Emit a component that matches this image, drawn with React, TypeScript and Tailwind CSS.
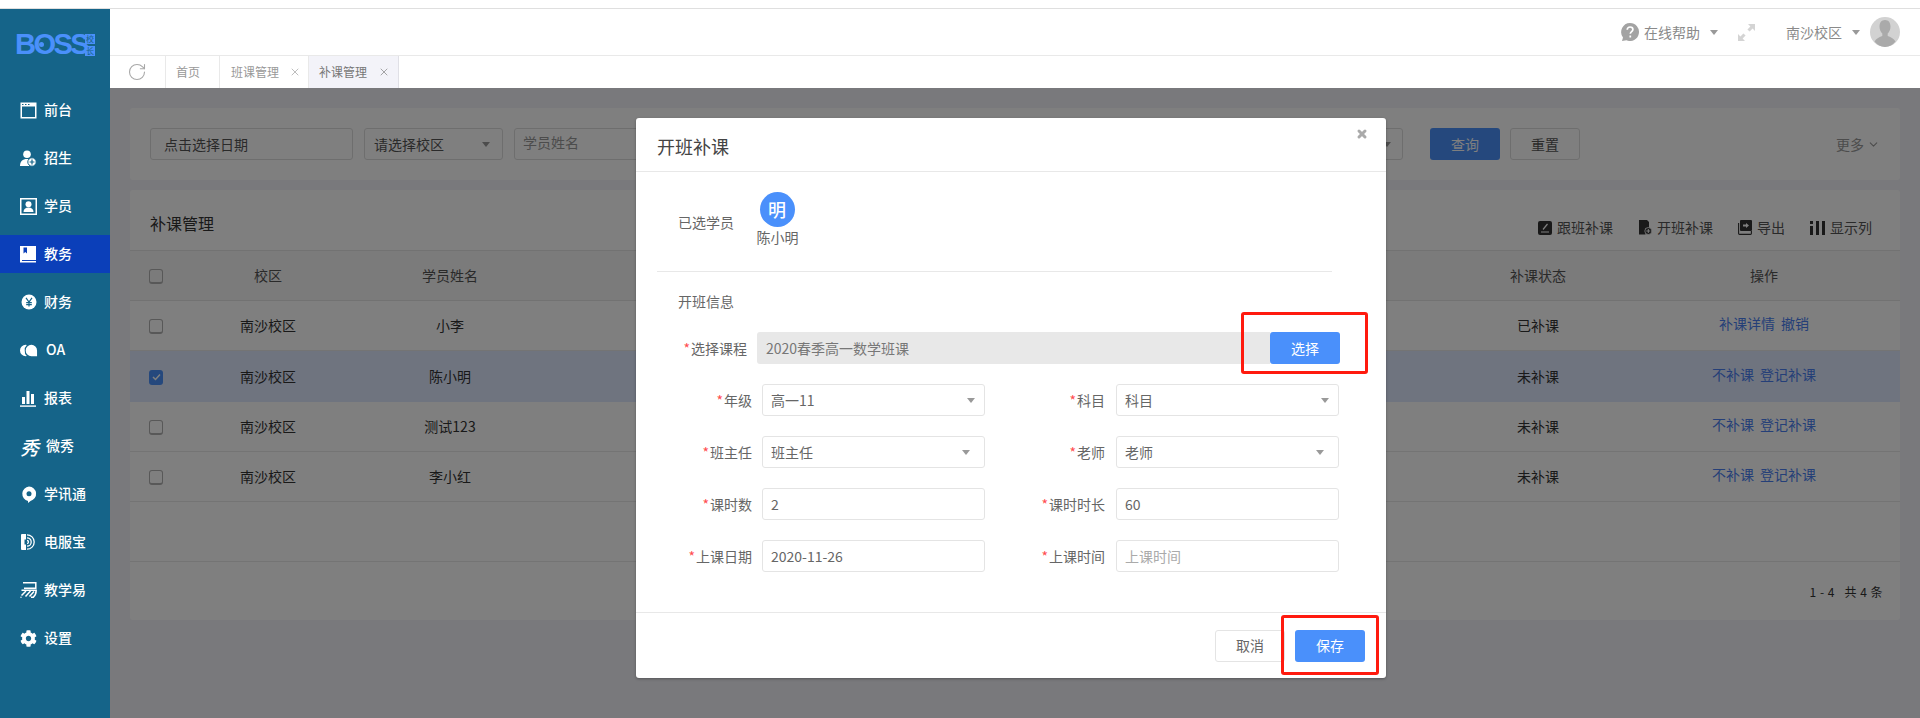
import { FaCog } from "react-icons/fa";
import { RotateCw, X, ChevronDown } from "lucide-react";
import type { ReactNode } from "react";

const font = { fontFamily: '"Noto Sans CJK SC", "Noto Sans", sans-serif' };

function IconCalendar() {
  return (
    <svg width="17" height="17" viewBox="0 0 17 17">
      <rect x="0.5" y="0.5" width="16" height="16" fill="#fff" />
      <rect x="2" y="4.5" width="13" height="10.5" fill="#156489" />
      <rect x="2" y="2" width="1.5" height="1" fill="#156489" />
      <rect x="5" y="2" width="1.5" height="1" fill="#156489" />
      <rect x="8" y="2" width="1.5" height="1" fill="#156489" />
    </svg>
  );
}

function IconUserAdd() {
  return (
    <svg width="17" height="17" viewBox="0 0 17 17">
      <circle cx="7" cy="4.2" r="3.8" fill="#fff" />
      <path d="M0 16c0-4.5 2.5-7 7-7 2 0 3.4.5 4.5 1.5L9 16z" fill="#fff" />
      <circle cx="12" cy="12" r="4.2" fill="#fff" stroke="#156489" strokeWidth="1" />
      <path d="M12 9.6v4.8M9.6 12h4.8" stroke="#156489" strokeWidth="1.2" />
    </svg>
  );
}

function IconStudent() {
  return (
    <svg width="17" height="17" viewBox="0 0 17 17">
      <rect x="0.75" y="0.75" width="15.5" height="15.5" fill="none" stroke="#fff" strokeWidth="1.5" />
      <circle cx="8.5" cy="6.3" r="3" fill="#fff" />
      <path d="M3.5 14c0-3 2-4.5 5-4.5s5 1.5 5 4.5z" fill="#fff" />
    </svg>
  );
}

function IconBook() {
  return (
    <svg width="17" height="17" viewBox="0 0 17 17">
      <path d="M0 0h16v14H2v1h14v1.5H0z" fill="#fff" />
      <path d="M3.5 1.5h3.5v6L5.25 6 3.5 7.5z" fill="#0b3fb9" />
    </svg>
  );
}

function IconYen() {
  return (
    <svg width="16" height="16" viewBox="0 0 16 16" className="ml-[1px]">
      <circle cx="8" cy="8" r="7.5" fill="#fff" />
      <path d="M5 3.8 8 8l3-4.2M5.2 8.6h5.6M5.2 10.6h5.6M8 8v4.6" fill="none" stroke="#156489" strokeWidth="1.2" />
    </svg>
  );
}

function IconOA() {
  return (
    <svg width="19" height="13" viewBox="0 0 19 13">
      <path d="M6 .5a6 6 0 1 0 0 12 6 6 0 0 0 1.2-.1A7 7 0 0 1 5 6.5 7 7 0 0 1 7.2.6 6 6 0 0 0 6 .5z" fill="#fff" />
      <path d="M12 .5a6 6 0 0 1 6 6v6h-6a6 6 0 1 1 0-12z" fill="#fff" />
    </svg>
  );
}

function IconChart() {
  return (
    <svg width="16" height="17" viewBox="0 0 16 17">
      <rect x="2" y="7" width="3" height="7" fill="#fff" />
      <rect x="6.5" y="1" width="3" height="13" fill="#fff" />
      <rect x="11" y="4" width="3" height="10" fill="#fff" />
      <rect x="0" y="15.4" width="16" height="1.4" fill="#fff" />
    </svg>
  );
}

function IconPin() {
  return (
    <svg width="16" height="17" viewBox="0 0 16 17" className="ml-[1px]">
      <path d="M8 .5a7.3 7.3 0 0 1 1.5 14.4L7 17v-2.1A7.3 7.3 0 0 1 8 .5z" fill="#fff" />
      <circle cx="8" cy="7.8" r="2.5" fill="#156489" />
    </svg>
  );
}

function IconPhone() {
  return (
    <svg width="15" height="16" viewBox="0 0 15 16" className="ml-[1px]">
      <path d="M1 0h4v5.5H3.5v5H5V16H1a1 1 0 0 1-1-1V1a1 1 0 0 1 1-1z" fill="#fff" />
      <path d="M6 .8a7.2 7.2 0 0 1 0 14.4M6 3.8a4.2 4.2 0 0 1 0 8.4M6 6.5a1.5 1.5 0 0 1 0 3" fill="none" stroke="#fff" strokeWidth="1.3" />
    </svg>
  );
}

function IconStripes() {
  return (
    <svg width="17" height="16" viewBox="0 0 17 16">
      <path d="M3 .8h12.8v5.4H4" fill="none" stroke="#fff" strokeWidth="1.5" />
      <path d="M1.5 8.3h14.7c0 3-.8 5.2-3 7H11" fill="none" stroke="#fff" strokeWidth="1.5" />
      <path d="M6 9 1.5 13.5M10.5 9 5.5 14.5M14 9.5 9.5 14.5" fill="none" stroke="#fff" strokeWidth="1.5" />
      <circle cx="1" cy="15.3" r="0.7" fill="#fff" />
    </svg>
  );
}

function IconEdit() {
  return (
    <svg width="14" height="14" viewBox="0 0 14 14">
      <rect width="14" height="14" rx="2" fill="#333" />
      <path d="M3 11h8M5 8.5 9.5 3" stroke="#fff" strokeWidth="1.2" fill="none" />
    </svg>
  );
}

function IconDocAdd() {
  return (
    <svg width="14" height="15" viewBox="0 0 14 15">
      <path d="M1 0h8l2 2v6H7.5v6.5H1z" fill="#333" />
      <circle cx="10.3" cy="11" r="3.5" fill="#333" stroke="#fff" strokeWidth="0.8" />
      <path d="M10.3 9v4M8.3 11h4" stroke="#fff" strokeWidth="1" />
    </svg>
  );
}

function IconExport() {
  return (
    <svg width="14" height="15" viewBox="0 0 14 15">
      <path d="M.6 3v10.5c0 .5.4.9.9.9h11c.5 0 .9-.4.9-.9V11" fill="none" stroke="#333" strokeWidth="1.1" />
      <rect x="2" y="0" width="12" height="11" rx="1" fill="#333" />
      <path d="M5 4.5h3V3l3 2.5L8 8V6.5H5z" fill="#fff" />
    </svg>
  );
}

function IconColumns() {
  return (
    <svg width="15" height="14" viewBox="0 0 15 14">
      <rect x="0" y="0" width="3" height="3" fill="#333" />
      <rect x="0" y="5" width="3" height="9" fill="#333" />
      <rect x="6" y="0" width="3" height="14" fill="#333" />
      <rect x="12" y="0" width="3" height="14" fill="#333" />
    </svg>
  );
}

const navItems: { label: string; icon: ReactNode; active?: boolean; shift?: boolean }[] = [
  { label: "前台", icon: <IconCalendar /> },
  { label: "招生", icon: <IconUserAdd /> },
  { label: "学员", icon: <IconStudent /> },
  { label: "教务", icon: <IconBook />, active: true },
  { label: "财务", icon: <IconYen /> },
  { label: "OA", icon: <IconOA />, shift: true },
  { label: "报表", icon: <IconChart /> },
  { label: "微秀", icon: <span className="text-[19px] leading-none font-medium italic">秀</span>, shift: true },
  { label: "学讯通", icon: <IconPin /> },
  { label: "电服宝", icon: <IconPhone /> },
  { label: "教学易", icon: <IconStripes /> },
  { label: "设置", icon: <FaCog size={17} /> },
];

function Sidebar() {
  return (
    <aside className="w-[110px] shrink-0 bg-[#156489] text-white">
      <div className="relative h-[82px] pl-[15px] pt-[24px] flex items-start">
        <span
          className="text-[29px] leading-[23px] font-bold tracking-[-2.5px] text-[#4a90fb]"
          style={{ fontFamily: '"Liberation Sans", sans-serif' }}
        >
          BOSS
        </span>
        <span className="absolute left-[39px] top-[33px] w-[5px] h-[5px] rounded-full bg-[#4a90fb]" />
        <div className="absolute left-[85px] top-[25px] flex flex-col gap-[2px]">
          <span className="w-[10px] h-[10px] bg-[#4a90fb] text-[#156489] text-[8px] leading-[10px] text-center">校</span>
          <span className="w-[10px] h-[10px] bg-[#4a90fb] text-[#156489] text-[8px] leading-[10px] text-center">长</span>
        </div>
      </div>
      {navItems.map((item) => (
        <div
          key={item.label}
          className={
            item.active
              ? "h-[38px] mb-[10px] pl-[20px] flex items-center bg-[#0b3fb9]"
              : "h-[38px] mb-[10px] pl-[20px] flex items-center"
          }
        >
          <span className="w-[18px] flex justify-start items-center">{item.icon}</span>
          <span
            className={
              item.shift
                ? "ml-[8px] mt-[-2px] text-[14px] font-medium leading-none"
                : "ml-[6px] mt-[-2px] text-[14px] font-medium leading-none"
            }
          >
            {item.label}
          </span>
        </div>
      ))}
    </aside>
  );
}

function Caret({ className = "" }: { className?: string }) {
  return (
    <span
      className={
        "w-0 h-0 border-l-[4.5px] border-r-[4.5px] border-t-[5px] border-l-transparent border-r-transparent border-t-[#999] " +
        className
      }
    />
  );
}

function TopBar() {
  return (
    <div className="h-[47px] border-b border-[#e9e9e9] flex items-center justify-end pr-[20px] text-[14px] text-[#8a8a8a]">
      <svg width="18" height="18" viewBox="0 0 18 18">
        <path d="M9 0a9 9 0 1 1-3.5 17.3L1 18l1-3.6A9 9 0 0 1 9 0z" fill="#a3a3a3" />
        <path d="M6.2 6.8c0-1.7 1.2-2.8 2.9-2.8s2.8 1 2.8 2.4c0 2.2-2.6 2.2-2.6 4.4M9.3 12.4v2" fill="none" stroke="#fff" strokeWidth="1.7" />
      </svg>
      <span className="ml-[5px]">在线帮助</span>
      <Caret className="ml-[10px]" />
      <svg className="ml-[20px]" width="17" height="17" viewBox="0 0 17 17">
        <path d="M10 0h7v7l-2.4-2.4-3 3-2.2-2.2 3-3zM7 17H0v-7l2.4 2.4 3-3 2.2 2.2-3 3z" fill="#d4d4d4" />
      </svg>
      <span className="ml-[31px]">南沙校区</span>
      <Caret className="ml-[10px]" />
      <svg className="ml-[10px]" width="30" height="30" viewBox="0 0 30 30">
        <circle cx="15" cy="15" r="15" fill="#d2d2d2" />
        <path d="M15 3c3.6 0 5.5 2.8 5.5 6.5 0 3-1.2 5.5-2.8 7v2.5c2.5 1 6.3 2.5 7.8 5.5A15 15 0 0 1 15 30a15 15 0 0 1-10.5-5.5c1.5-3 5.3-4.5 7.8-5.5v-2.5c-1.6-1.5-2.8-4-2.8-7C9.5 5.8 11.4 3 15 3z" fill="#aaa" />
      </svg>
    </div>
  );
}

function TabBar() {
  return (
    <div className="h-[32px] flex text-[12px] text-[#999]">
      <div className="w-[56px] flex items-center justify-center border-r border-[#e9e9e9]">
        <RotateCw size={20} strokeWidth={1.3} color="#a8a8a8" className="ml-[-1px]" />
      </div>
      <div className="w-[54px] flex items-center pl-[10px] border-r border-[#e9e9e9]">首页</div>
      <div className="w-[89px] flex items-center pl-[11px] border-r border-[#e9e9e9]">
        班课管理
        <X size={12} strokeWidth={1.3} className="ml-[10px]" />
      </div>
      <div className="w-[90px] flex items-center pl-[10px] bg-[#f3f3f9] border-r border-[#e0e0e6] text-[#777]">
        补课管理
        <X size={12} strokeWidth={1.3} className="ml-[11px]" />
      </div>
    </div>
  );
}

function FilterCard() {
  return (
    <div className="h-[72px] bg-white rounded-[3px] flex items-center pl-[20px] pr-[20px] text-[14px] text-[#555]">
      <div className="w-[203px] h-[32px] border border-[#ddd] rounded-[3px] flex items-center pl-[13px]">点击选择日期</div>
      <div className="ml-[11px] w-[139px] h-[32px] border border-[#ddd] rounded-[3px] flex items-center justify-between pl-[9px] pr-[12px]">
        请选择校区
        <Caret />
      </div>
      <div className="ml-[11px] w-[200px] h-[32px] border border-[#ddd] rounded-[3px] flex items-center pl-[8px] pb-[3px] text-[#999]">学员姓名</div>
      <div className="ml-auto w-[150px] h-[32px] border border-[#ddd] rounded-[3px] flex items-center justify-end pr-[11px]">
        <Caret className="border-t-[#666]" />
      </div>
      <div className="ml-[27px] w-[70px] h-[32px] rounded-[3px] bg-[#4a90fb] text-white flex items-center justify-center">查询</div>
      <div className="ml-[10px] w-[70px] h-[32px] rounded-[3px] border border-[#ddd] flex items-center justify-center">重置</div>
      <div className="ml-[256px] flex items-center text-[#999]">
        更多
        <ChevronDown size={13} className="ml-[3px]" />
      </div>
    </div>
  );
}

function Check({ checked }: { checked?: boolean }) {
  return (
    <span
      className={
        checked
          ? "ml-[19px] mt-[1px] w-[14px] h-[15px] rounded-[3px] bg-[#4a90fb] flex items-center justify-center"
          : "ml-[19px] mt-[1px] w-[14px] h-[15px] rounded-[3px] border border-[#b0b0b0] border-b-2 block"
      }
    >
      {checked && (
        <svg width="9" height="8" viewBox="0 0 9 8">
          <path d="M1 4l2.5 2.5L8 1.5" fill="none" stroke="#fff" strokeWidth="1.5" />
        </svg>
      )}
    </span>
  );
}

const gridCols = "grid grid-cols-[48px_180px_184px_1fr_200px_252px_10px] items-center text-center";

const rows = [
  { name: "小李", status: "已补课", ops: ["补课详情", "撤销"], h: "h-[50px]" },
  { name: "陈小明", status: "未补课", ops: ["不补课", "登记补课"], selected: true, h: "h-[51px]" },
  { name: "测试123", status: "未补课", ops: ["不补课", "登记补课"], h: "h-[50px]" },
  { name: "李小红", status: "未补课", ops: ["不补课", "登记补课"], h: "h-[50px]" },
];

function TableCard() {
  const tools: [ReactNode, string][] = [
    [<IconEdit />, "跟班补课"],
    [<IconDocAdd />, "开班补课"],
    [<IconExport />, "导出"],
    [<IconColumns />, "显示列"],
  ];
  return (
    <div className="mt-[10px] h-[430px] bg-white rounded-[3px] text-[14px] text-[#333]">
      <div className="h-[60px] flex items-center pl-[20px] pr-[28px]">
        <span className="text-[16px] mt-[6px]">补课管理</span>
        <div className="ml-auto flex items-center gap-[25px] mt-[15px] text-[#555]">
          {tools.map(([icon, label]) => (
            <span key={label} className="flex items-center gap-[5px]">
              {icon}
              {label}
            </span>
          ))}
        </div>
      </div>
      <div className={gridCols + " h-[51px] bg-[#f6f6f6] border-y border-[#e4e4e4] text-[#555]"}>
        <Check />
        <span>校区</span>
        <span>学员姓名</span>
        <span />
        <span>补课状态</span>
        <span>操作</span>
      </div>
      {rows.map((r) => (
        <div
          key={r.name}
          className={gridCols + " " + r.h + (r.selected ? " bg-[#dee8ff]" : " border-b border-[#e8e8e8]")}
        >
          <Check checked={r.selected} />
          <span>南沙校区</span>
          <span>{r.name}</span>
          <span />
          <span>{r.status}</span>
          <span className="text-[#4a7ef0] flex justify-center gap-[6px] mt-[-4px]">
            {r.ops.map((op) => (
              <span key={op}>{op}</span>
            ))}
          </span>
        </div>
      ))}
      <div className="h-[60px] border-b border-[#e8e8e8]" />
      <div className="h-[58px] pt-[2px] flex items-center justify-end pr-[17px] text-[12px] tracking-[0.5px]">
        1 - 4 &nbsp; 共 4 条
      </div>
    </div>
  );
}

function FieldLabel({ children, className }: { children: string; className: string }) {
  return (
    <label className={"text-right text-[#666] shrink-0 " + className}>
      <span className="text-[#ff4d4f] mr-[1px]">*</span>
      {children}
    </label>
  );
}

function Box({ children, className = "" }: { children: ReactNode; className?: string }) {
  return (
    <div className={"w-[223px] h-[32px] border border-[#e4e4e4] rounded-[3px] flex items-center justify-between pl-[8px] shrink-0 " + className}>
      {children}
    </div>
  );
}

function Modal() {
  return (
    <div className="absolute left-[636px] top-[118px] w-[750px] h-[560px] bg-white rounded-[3px] shadow-[0_1px_3px_rgba(0,0,0,0.3)] text-[14px] text-[#666] flex flex-col">
      <div className="h-[54px] shrink-0 border-b border-[#e8e8e8] relative flex items-center pl-[21px] pt-[4px]">
        <span className="text-[18px] text-[#444]">开班补课</span>
        <X size={12} strokeWidth={6} color="#aaa" className="absolute right-[18px] top-[10px]" />
      </div>
      <div className="flex-1">
        <div className="flex pl-[42px] pt-[20px] h-[99px]">
          <span className="w-[79px] mt-[20px]">已选学员</span>
          <div className="w-[41px] flex flex-col items-center">
            <span className="mr-[1px] w-[35px] h-[35px] rounded-full bg-[#4a90fb] text-white text-[18px] font-medium flex items-center justify-center">明</span>
            <span className="whitespace-nowrap leading-[20px]">陈小明</span>
          </div>
        </div>
        <div className="ml-[21px] w-[675px] border-t border-[#e8e8e8]" />
        <div className="ml-[42px] mt-[19px] leading-[20px]">开班信息</div>
        <div className="mt-[21px] flex items-center">
          <FieldLabel className="w-[111px]">选择课程</FieldLabel>
          <div className="ml-[10px] w-[513px] h-[32px] bg-[#e8e8e8] rounded-l-[3px] flex items-center pl-[9px] text-[#777]">2020春季高一数学班课</div>
          <div className="w-[70px] h-[32px] bg-[#4a90fb] rounded-[3px] text-white flex items-center justify-center">选择</div>
        </div>
        <div className="mt-[20px] flex flex-col gap-[20px]">
          <div className="flex items-center">
            <FieldLabel className="w-[116px]">年级</FieldLabel>
            <Box className="ml-[10px] pr-[9px]">高一11<Caret /></Box>
            <FieldLabel className="w-[120px]">科目</FieldLabel>
            <Box className="ml-[11px] pr-[9px]">科目<Caret /></Box>
          </div>
          <div className="flex items-center">
            <FieldLabel className="w-[116px]">班主任</FieldLabel>
            <Box className="ml-[10px] pr-[14px]">班主任<Caret /></Box>
            <FieldLabel className="w-[120px]">老师</FieldLabel>
            <Box className="ml-[11px] pr-[14px]">老师<Caret /></Box>
          </div>
          <div className="flex items-center">
            <FieldLabel className="w-[116px]">课时数</FieldLabel>
            <Box className="ml-[10px]">2</Box>
            <FieldLabel className="w-[120px]">课时时长</FieldLabel>
            <Box className="ml-[11px]">60</Box>
          </div>
          <div className="flex items-center">
            <FieldLabel className="w-[116px]">上课日期</FieldLabel>
            <Box className="ml-[10px]">2020-11-26</Box>
            <FieldLabel className="w-[120px]">上课时间</FieldLabel>
            <Box className="ml-[11px] text-[#aaa]">上课时间</Box>
          </div>
        </div>
      </div>
      <div className="h-[66px] shrink-0 border-t border-[#e8e8e8] flex items-center justify-end gap-[10px] pr-[21px]">
        <div className="w-[70px] h-[32px] border border-[#e4e4e4] rounded-[3px] flex items-center justify-center">取消</div>
        <div className="w-[70px] h-[32px] bg-[#4a90fb] rounded-[3px] text-white flex items-center justify-center">保存</div>
      </div>
      {/* red annotation boxes */}
      <div className="absolute left-[605px] top-[194px] w-[127px] h-[62px] border-[3px] border-[#ff1a0e] rounded-[3px]" />
      <div className="absolute left-[645px] top-[497px] w-[98px] h-[60px] border-[3px] border-[#ff1a0e] rounded-[3px]" />
    </div>
  );
}

export default function App() {
  return (
    <div className="relative w-[1920px] h-[718px] overflow-hidden bg-white" style={font}>
      <div className="h-[9px] border-b border-[#dfdfdf]" />
      <div className="flex h-[709px]">
        <Sidebar />
        <main className="flex-1 flex flex-col relative">
          <TopBar />
          <TabBar />
          <div className="flex-1 bg-[#f3f3f9] pt-[20px] pl-[20px] pr-[20px] relative">
            <FilterCard />
            <TableCard />
            <div className="absolute inset-0 bg-black/50" />
          </div>
        </main>
      </div>
      <Modal />
    </div>
  );
}
